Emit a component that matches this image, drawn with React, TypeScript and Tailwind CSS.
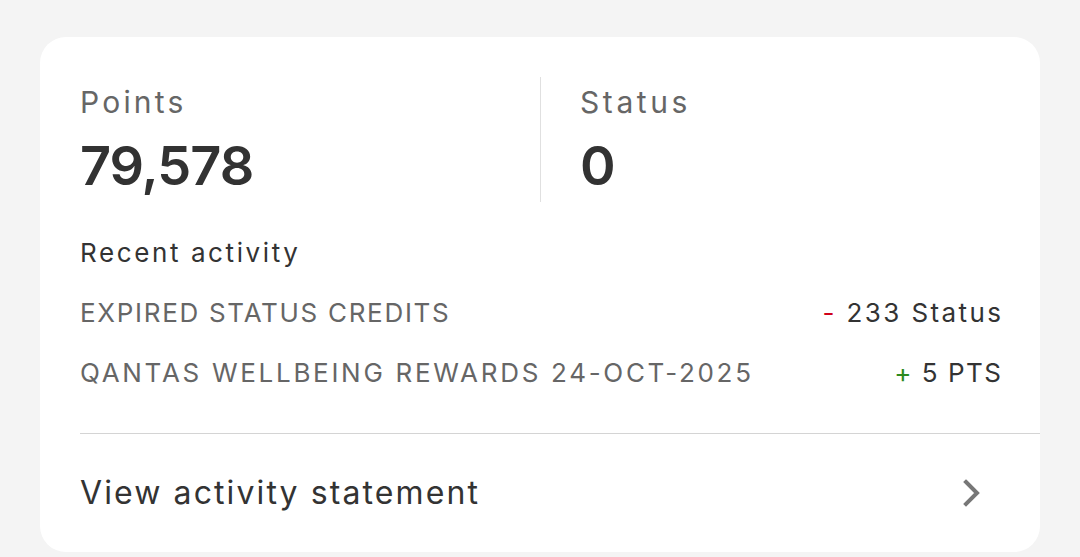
import React from "react";

export default function App() {
  const font = { fontFamily: "Inter, 'Noto Sans', sans-serif" };
  return (
    <div className="w-[1080px] h-[557px] bg-[#f4f4f4] pt-[37px] px-[40px] overflow-hidden" style={font}>
      <div className="bg-white rounded-[26px] h-[515px] pl-[40px] flex flex-col">
        <div className="flex pt-[40px] pr-[40px]">
          <div className="w-[460px] flex flex-col">
            <div className="text-[30px] leading-[50px] tracking-[3.2px] text-[#666]">Points</div>
            <div className="text-[54px] leading-[78px] tracking-[-1px] font-semibold text-[#323232]">79,578</div>
          </div>
          <div className="w-px h-[125px] bg-[#e0e0e0]" />
          <div className="flex flex-col pl-[39px]">
            <div className="text-[30px] leading-[50px] tracking-[3.6px] text-[#666]">Status</div>
            <div className="text-[54px] leading-[78px] font-semibold text-[#323232]">0</div>
          </div>
        </div>
        <div className="pr-[40px] mt-[30px] text-[26px] leading-[36px] tracking-[2.6px] text-[#333]">Recent activity</div>
        <div className="pr-[39px] mt-[24px] flex justify-between text-[26px] leading-[36px] text-[#666]">
          <span className="tracking-[1.7px]">EXPIRED STATUS CREDITS</span>
          <span className="text-[#333] tracking-[2.4px] -mr-[2.4px]"><span className="text-[#d0021b]">-</span> 233 Status</span>
        </div>
        <div className="pr-[39px] mt-[24px] flex justify-between text-[26px] leading-[36px] text-[#666]">
          <span className="tracking-[2.7px]">QANTAS WELLBEING REWARDS 24-OCT-2025</span>
          <span className="text-[#333] tracking-[1.5px] -mr-[1.5px]"><span className="text-[#2d8a1f]">+</span> 5 PTS</span>
        </div>
        <div className="mt-[42px] h-px bg-[#d4d4d4]" />
        <div className="flex items-center justify-between pr-[58px] h-[120px]">
          <span className="text-[32px] tracking-[2.1px] text-[#333]">View activity statement</span>
          <svg width="20" height="28" viewBox="0 0 20 28" fill="none">
            <path d="M4 3 L15 14 L4 25" stroke="#777" strokeWidth="4" strokeLinecap="square" />
          </svg>
        </div>
      </div>
    </div>
  );
}
